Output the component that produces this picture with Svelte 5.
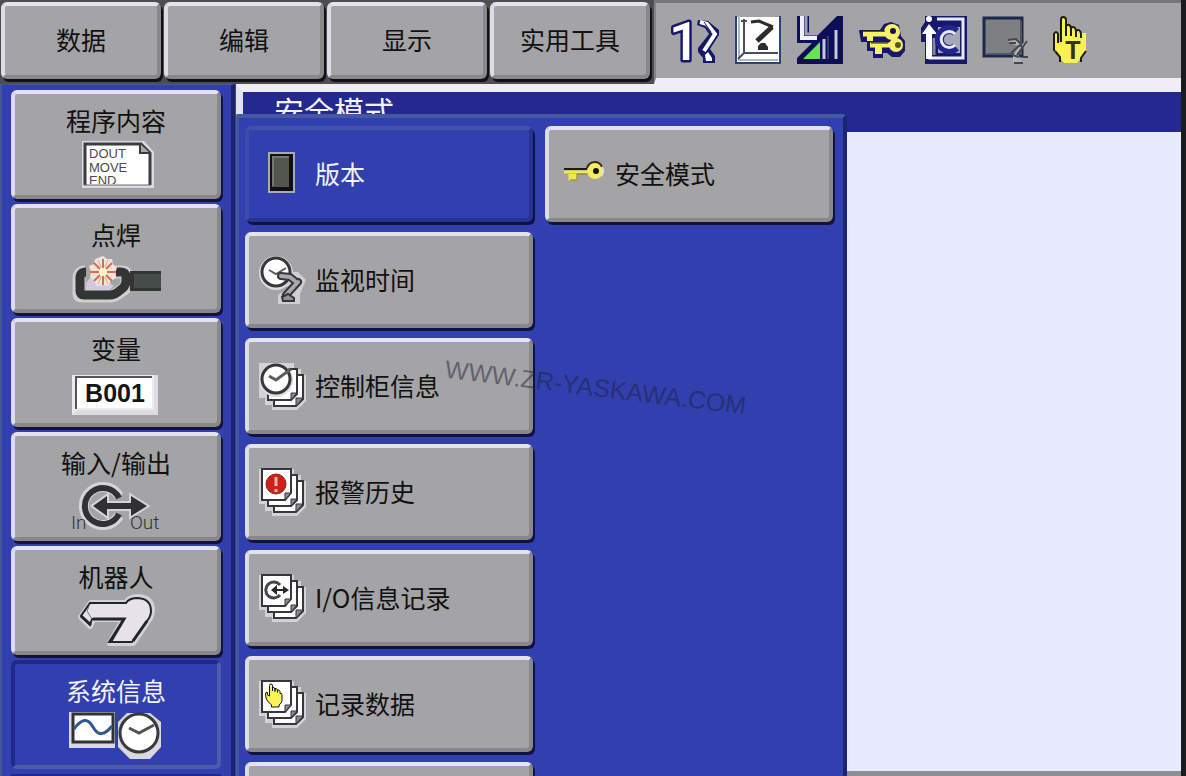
<script>
  const topMenu = ['数据', '编辑', '显示', '实用工具'];
  const tools = [
    { id: 'cycle', label: '步骤' },
    { id: 'coord', label: '坐标系' },
    { id: 'speed', label: '手动速度' },
    { id: 'keys', label: '安全' },
    { id: 'loop', label: '循环' },
    { id: 'state', label: '状态' },
    { id: 'teach', label: '示教' }
  ];
  const sections = [
    { id: 'doc', label: '程序内容' },
    { id: 'weld', label: '点焊' },
    { id: 'variable', label: '变量' },
    { id: 'inout', label: '输入/输出' },
    { id: 'robot', label: '机器人' },
    { id: 'system', label: '系统信息' }
  ];
  const firstColumn = [
    { id: 'version', label: '版本' },
    { id: 'time', label: '监视时间' },
    { id: 'cabinet', label: '控制柜信息' },
    { id: 'alarm', label: '报警历史' },
    { id: 'iolog', label: 'I/O信息记录' },
    { id: 'record', label: '记录数据' }
  ];
  let section = $state('system');
  let item = $state('version');
</script>

{#snippet hand()}
  <path d="M11 25V4Q11 1 14 1Q17 1 17 4V15V8Q21 7 22 11V16V10Q26 9 27 13V18V13Q31 12 32 16V20Q36 18 36 23V34Q36 39 30 43V47H15V43L7 35Q3 30 3 21Q3 16 7 18V23Z" fill="#fbf45a" stroke="#16140e" stroke-width="2" />
{/snippet}

{#snippet pages()}
  <path d="M1 1H36V7H43V13H48V39L39 48H14V43H7V36H1Z" fill="#d3d2d7" />
  <path d="M16 13H45V37L38 44H16Z" fill="#fff" stroke="#37373a" stroke-width="2" />
  <path d="M45 36L38 36V44Z" fill="#8b8a8e" stroke="#37373a" />
  <path d="M10 7H39V32L33 38H10Z" fill="#fff" stroke="#37373a" stroke-width="2" />
  <path d="M39 31L33 31V38Z" fill="#8b8a8e" stroke="#37373a" />
{/snippet}

{#snippet sheet()}
  <path d="M4 1H33V25L27 32H4Z" fill="#fff" stroke="#37373a" stroke-width="2" />
  <path d="M33 25H27V32Z" fill="#8b8a8e" stroke="#37373a" />
{/snippet}

{#snippet toolIcon(id)}
  <svg viewBox="0 0 48 48" width="48" height="48" aria-hidden="true">
    {#if id === 'cycle'}
      <text x="-3" y="44" font-size="54" font-weight="500" font-family="Roboto, sans-serif" fill="#fff" stroke="#16186c" stroke-width="5" stroke-linejoin="round" paint-order="stroke">1</text>
      <path d="M26 4L36 5L47 14V19L38 33L43 40V47H31V42L26 36V32L37 18L33 12L25 9Z" fill="#16186c" />
      <path d="M28 6L35 8L43 18L32 35" fill="none" stroke="#fff" stroke-width="4" />
      <path d="M33 39L36 36L40 42V45H34Z" fill="#fff" />
      <path d="M32 6L39 16L35 24" fill="none" stroke="#16186c" stroke-width="1" />
    {:else if id === 'coord'}
      <rect x="2" y="1" width="44" height="46" fill="#fff" />
      <path d="M2 0V47H46V0" fill="none" stroke="#2d4370" stroke-width="2" />
      <path d="M5 0V44H44" fill="none" stroke="#a9b8cc" stroke-width="2" />
      <path d="M10 3V37H44M10 37L4 43M7 5H13" fill="none" stroke="#4a4e55" stroke-width="2" />
      <path d="M17 6L25 5L39 11" fill="none" stroke="#2c2c2e" stroke-width="3" />
      <path d="M38 11L23 25" fill="none" stroke="#2c2c2e" stroke-width="5" />
      <path d="M27 27H31L34 31V34H24V30Z" fill="#2c2c2e" />
    {:else if id === 'speed'}
      <path d="M47 0V48H1V42L16 27H1V0H13V19H22L41 0Z" fill="#0d0d58" />
      <path d="M6 0V22H21" fill="none" stroke="#f2f1fa" stroke-width="4" />
      <path d="M10 0V18H22" fill="none" stroke="#a2a2b4" stroke-width="3" />
      <path d="M7 43L24 26V43Z" fill="#62e653" />
      <path d="M28 43V23M40 43V14" fill="none" stroke="#c7c8dd" stroke-width="3" />
      <path d="M32 43V20" fill="none" stroke="#5d5e93" stroke-width="1" />
    {:else if id === 'keys'}
      <path d="M1 14H22L26 8L33 6L41 9L43 20L47 25V35L42 41H34L29 37H25V42H15V35H9V26H3Z" fill="#16186c" />
      <path d="M5 18H28M12 29H34" stroke="#f9f06a" stroke-width="5" />
      <path d="M9 20H15V25H9ZM17 31H24V38H17Z" fill="#f9f06a" />
      <circle cx="34" cy="16" r="8" fill="#f9f06a" />
      <circle cx="38" cy="29" r="7" fill="#f9f06a" />
      <path d="M5 15H27M13 27H30" stroke="#26240e" stroke-width="1" />
      <circle cx="35" cy="15" r="3" fill="#14154b" />
      <circle cx="40" cy="29" r="3" fill="#55551f" />
    {:else if id === 'loop'}
      <path d="M1 12L5 6V0H47V48H5V26H1Z" fill="#16186c" />
      <path d="M17 3H43V42H10V30" fill="none" stroke="#e9ebfa" stroke-width="3" />
      <path d="M18 11H40V37H18Z" fill="#a5a7b4" />
      <path d="M14 9H40" stroke="#16186c" stroke-width="4" />
      <circle cx="9" cy="3" r="3" fill="#fff" />
      <path d="M9 8L17 18H12V43H6V18H2Z" fill="#fff" />
      <path d="M14 22V39" stroke="#8587a0" stroke-width="3" />
      <path d="M36 16A10 10 0 1 0 36 31" fill="none" stroke="#22268a" stroke-width="9" />
      <path d="M35 18A8 8 0 1 0 35 29" fill="none" stroke="#e9ebfa" stroke-width="3" />
    {:else if id === 'state'}
      <rect x="2" y="2" width="38" height="38" fill="#7d7f80" stroke="#1c2850" stroke-width="3" />
      <path d="M5 38H39V5" fill="none" stroke="#4d5565" stroke-width="2" />
      <path d="M26 23H36L40 28L46 24L36 38L40 46H31V40L37 30L27 27Z" fill="#b4b3b6" />
      <path d="M26 24L34 23L39 28V31M27 27H34M38 29L29 37M45 25L35 39M30 39L37 41M32 47H41M41 41H46" fill="none" stroke="#45474c" stroke-width="2" />
    {:else}
      <path d="M17 25V4Q17 1 19 1Q22 1 22 4V16V8Q26 7 27 11V16V11Q31 10 32 14V18V14Q36 13 37 17L42 17V36L37 42L33 47H20L16 42L11 36Q9 29 9 18Q12 14 14 18V26Z" fill="#f8f154" />
      <path d="M10 35V18Q12 14 14 18V27M17 26V4Q17 1 19 1Q22 1 22 4V20M22 10Q26 7 27 12V20M27 12Q31 9 32 15V21M32 15Q36 12 37 18V22M11 35L16 41V46M42 35L37 42V46" fill="none" stroke="#1d1c12" stroke-width="2" />
      <text x="29" y="43" text-anchor="middle" font-size="25" font-weight="700" font-family="Liberation Sans, sans-serif" fill="#33321e">T</text>
    {/if}
  </svg>
{/snippet}

{#snippet sectionIcon(id)}
  <svg viewBox="0 0 96 50" width="96" height="50" aria-hidden="true">
    {#if id === 'doc'}
      <path d="M14 0H76L86 11V47H14Z" fill="#dcdcdf" />
      <path d="M17 44V3H73L82 12V44" fill="#fff" stroke="#3b3e3e" stroke-width="3" />
      <path d="M16 44H83" stroke="#66686a" stroke-width="1" />
      <path d="M72 3V12H82" fill="#aaa" stroke="#3b3e3e" stroke-width="2" />
      <svg class="crop" x="21" y="5" width="50" height="38" viewBox="0 0 50 38">
        <g font-size="13" font-family="Liberation Sans, sans-serif" fill="#4b4b4e">
          <text x="0" y="12">DOUT</text>
          <text x="0" y="26">MOVE</text>
          <text x="0" y="39">END</text>
        </g>
      </svg>
    {:else if id === 'weld'}
      <path d="M17 17Q11 17 11 23V39Q11 41 14 41H43Q46 41 50 38L56 34Q59 31 59 27V22Q59 17 54 17H47" fill="none" stroke="#cfced1" stroke-width="13" />
      <path d="M18 17Q12 17 12 23V36Q12 40 16 40H42Q46 40 50 37L55 33Q58 30 58 26V22Q58 17 53 17H48" fill="none" stroke="#313534" stroke-width="9" />
      <rect x="62" y="16" width="31" height="20" fill="#313534" />
      <rect x="66" y="19" width="27" height="14" fill="#454c4a" />
      <path d="M18 35V28L24 20L40 27L46 31L41 35Z" fill="#d3c9dc" />
      <path d="M35 1L39 4L44 4L45 9L49 13L47 18L48 23L43 26L40 31L35 30L29 31L26 26L22 22L23 17L21 11L26 9L27 4Z" fill="#f1e2dc" />
      <path d="M35 4V13M35 21V30M22 17H31M39 17H48M26 8L32 14M44 8L38 14M26 26L32 20M44 26L38 20" stroke="#d5704c" stroke-width="2" />
      <path d="M30 5L33 12M40 5L37 12M30 29L33 22M40 29L37 22" stroke="#e3a78c" stroke-width="1" />
      <circle cx="35" cy="17" r="4" fill="#fff4c8" />
    {:else if id === 'variable'}
      <rect x="4" y="6" width="86" height="40" fill="#ececec" />
      <path d="M4 46L9 41H86V6H90V46H4Z" fill="#dcdbde" />
      <path d="M8 40V8H84" fill="none" stroke="#555557" stroke-width="2" />
      <rect x="9" y="9" width="75" height="30" fill="#fff" />
      <text x="47" y="33" text-anchor="middle" font-size="25" font-weight="700" font-family="Liberation Sans, sans-serif" fill="#151515">B001</text>
    {:else if id === 'inout'}
      <path d="M51 13A19 19 0 1 0 51 33" fill="none" stroke="#d5d5d7" stroke-width="10" />
      <path d="M25 23L39 13V20H63V13L79 23L63 33V26H39V33Z" fill="#303133" stroke="#d5d5d7" stroke-width="4" paint-order="stroke" />
      <path d="M51 15A18 18 0 1 0 51 31" fill="none" stroke="#303133" stroke-width="6" />
      <path d="M28 23L38 15L37 21H66L64 15L77 23L64 31L66 25H37L38 31Z" fill="#303133" />
      <g font-size="19" font-family="Roboto, sans-serif" font-weight="300" fill="#333336">
        <text x="3" y="46">In</text>
        <text x="62" y="46">Out</text>
      </g>
    {:else if id === 'robot'}
      <path d="M23 6H58Q61 0 70 0Q84 1 84 13Q84 19 80 24L65 46H42L56 22H25L22 29L13 20Z" fill="#ecebee" stroke="#d3d2d6" stroke-width="6" stroke-linejoin="round" />
      <path d="M22 6H58Q61 1 70 1Q83 2 83 14Q83 19 79 24L64 46H42L56 22H25V27L22 29L13 19Z" fill="#e6e4ea" />
      <path d="M64 45L79 24Q83 19 83 14Q83 2 70 1Q61 1 58 6H22L13 19L22 28L24 22H56L41 45Z" fill="none" stroke="#252527" stroke-width="2" />
      <path d="M25 22H56L43 44M13 19L23 28M79 24L65 44" fill="none" stroke="#252527" stroke-width="3" />
      <path d="M22 7L19 14L24 22" fill="none" stroke="#777" stroke-width="1" />
    {:else}
      <rect x="1" y="1" width="46" height="36" fill="#d9d9df" />
      <rect x="5" y="3" width="40" height="28" fill="#fff" stroke="#303336" stroke-width="3" />
      <path d="M6 18C14 7 20 7 25 16S36 25 44 15" fill="none" stroke="#2e5893" stroke-width="3" />
      <path d="M59 2H82L93 11V36L82 48H62L50 36V11Z" fill="#d9d9df" />
      <circle cx="71" cy="22" r="19" fill="#fff" stroke="#383a3d" stroke-width="3" />
      <path d="M61 17L71 22L86 14" fill="none" stroke="#4e5450" stroke-width="3" />
    {/if}
  </svg>
{/snippet}

{#snippet itemIcon(id)}
  <svg viewBox="0 0 48 48" width="48" height="48" aria-hidden="true">
    {#if id === 'version'}
      <rect x="10" y="2" width="27" height="41" fill="#a9a9bb" />
      <rect x="12" y="4" width="23" height="37" fill="#101010" />
      <rect x="14" y="7" width="17" height="30" fill="#52564f" />
      <path d="M15 36V7H31" fill="none" stroke="#74786f" stroke-width="2" />
    {:else if id === 'key'}
      <path d="M6 19H30" stroke="#1c1b14" stroke-width="2" />
      <path d="M6 22H32M12 24V29H18V24" fill="#f2e84e" stroke="#f2e84e" stroke-width="3" />
      <path d="M12 30H19V24H30" fill="none" stroke="#7d7726" stroke-width="1" />
      <circle cx="37" cy="21" r="8" fill="#f4ec62" />
      <path d="M29 18Q31 12 37 12Q42 12 44 17" fill="none" stroke="#33301b" stroke-width="2" />
      <circle cx="38" cy="21" r="3" fill="#15140d" />
      <path d="M43 26A8 8 0 0 0 44 17" fill="none" stroke="#e5e1d2" stroke-width="2" />
    {:else if id === 'time'}
      <circle cx="18" cy="17" r="17" fill="#dddce0" />
      <path d="M20 16H40L48 24L42 38V48H20V39L30 32Z" fill="#cfced2" />
      <circle cx="18" cy="16" r="14" fill="#fff" stroke="#37373a" stroke-width="3" />
      <path d="M11 14L18 18L28 12" fill="none" stroke="#5b5b5e" stroke-width="2" />
      <path d="M23 20L32 21L37 25M40 26L28 39" fill="none" stroke="#37373a" stroke-width="8" stroke-linejoin="round" stroke-linecap="round" />
      <path d="M23 20L32 21L37 25M40 26L28 39" fill="none" stroke="#a9a9ac" stroke-width="4" stroke-linejoin="round" stroke-linecap="round" />
      <path d="M24 41L30 38L36 42V45H25Z" fill="#929295" stroke="#37373a" stroke-width="2" />
    {:else}
      {@render pages()}
      {#if id === 'cabinet'}
        <circle cx="18" cy="18" r="17" fill="#dddce0" />
        <circle cx="18" cy="17" r="14" fill="#fff" stroke="#37373a" stroke-width="3" />
        <path d="M11 14L18 18L33 7" fill="none" stroke="#5b5b5e" stroke-width="3" />
      {:else}
        {@render sheet()}
        {#if id === 'alarm'}
          <circle cx="18" cy="16" r="10" fill="#cf211c" stroke="#8d2622" />
          <path d="M18 9V18M18 21V24" stroke="#f3b2a6" stroke-width="3" />
        {:else if id === 'iolog'}
          <path d="M22 11A8 8 0 1 0 22 21" fill="none" stroke="#46464a" stroke-width="3" />
          <path d="M13 16L19 11V15H25V12L31 16L25 20V17H19V21Z" fill="#29292c" />
        {:else}
          <svg x="6" y="3" width="24" height="25" viewBox="0 0 48 48">{@render hand()}</svg>
        {/if}
      {/if}
    {/if}
  </svg>
{/snippet}

<div class="pendant">
  <header class="top">
    <nav class="menubar">
      {#each topMenu as label}
        <button class="key topkey">{label}</button>
      {/each}
    </nav>
    <div class="tools">
      {#each tools as t}
        <button class="tool" aria-label={t.label}>{@render toolIcon(t.id)}</button>
      {/each}
    </div>
  </header>

  <div class="body">
    <nav class="sections">
      {#each sections as s}
        <button class="key section" class:on={section === s.id} onclick={() => (section = s.id)}>
          <span>{s.label}</span>
          {@render sectionIcon(s.id)}
        </button>
      {/each}
      <div class="under"></div>
    </nav>

    <main class="work">
      <h1>安全模式</h1>
      <div class="canvas"></div>

      <div class="popup">
        <div class="column">
          {#each firstColumn as m}
            <button class="key item" class:on={item === m.id} onclick={() => (item = m.id)}>
              {@render itemIcon(m.id)}
              <span>{m.label}</span>
            </button>
          {/each}
          <button class="key item" aria-label="下一项"></button>
        </div>
        <div class="column">
          <button class="key item">
            {@render itemIcon('key')}
            <span>安全模式</span>
          </button>
        </div>
        <div class="mark">WWW.ZR-YASKAWA.COM</div>
      </div>
    </main>
  </div>
</div>

<style>
  :global(body) {
    margin: 0;
    background: #1b1b1d;
  }
  .pendant {
    box-sizing: border-box;
    height: 100vh;
    overflow: hidden;
    display: flex;
    flex-direction: column;
    border-right: 5px solid #1b1b1d;
    font-family: 'Noto Sans CJK SC', 'Noto Sans', sans-serif;
    font-size: 25px;
    color: #111;
  }
  button {
    margin: 0;
    padding: 0;
    font: inherit;
    color: inherit;
  }
  svg {
    display: block;
    flex: none;
    overflow: visible;
  }
  .crop {
    overflow: hidden;
  }
  .key {
    box-sizing: border-box;
    background: #a4a3a5;
    border: 4px solid;
    border-color: #e4e2ee #89878a #89878a #dedce8;
    border-radius: 6px;
    box-shadow: 2px 3px 0 #12123f;
    line-height: 32px;
  }

  .top {
    flex: none;
    display: flex;
    height: 84px;
    background: #5b5b5d;
  }
  .menubar {
    display: flex;
    gap: 3px;
    padding: 2px 4px 5px 1px;
    background: #4e4e50;
  }
  .topkey {
    width: 160px;
    padding-bottom: 4px;
    box-shadow: 2px 3px 0 #111114;
  }
  .tools {
    flex: 1;
    display: flex;
    align-items: flex-start;
    gap: 14px;
    padding: 13px 16px 0 16px;
    background: #a4a3a5;
    border-top: 3px solid #77757a;
    border-bottom: 6px solid #f0edf6;
    border-left: 2px solid #858386;
  }
  .tool {
    border: 0;
    background: none;
  }

  .body {
    flex: 1;
    min-height: 0;
    display: flex;
    background: #3140ae;
  }
  .sections {
    flex: none;
    box-sizing: border-box;
    width: 235px;
    display: flex;
    flex-direction: column;
    gap: 5px;
    padding: 5px 10px 0 9px;
    border: solid;
    border-width: 1px 4px 0 2px;
    border-color: #44569c #1c226c #44569c #44569c;
    background: #3140ae;
  }
  .section {
    flex: none;
    height: 109px;
    display: flex;
    flex-direction: column;
    align-items: center;
    justify-content: flex-start;
    padding-top: 10px;
    gap: 5px;
  }
  .section.on {
    background: #3140ae;
    border-color: #20288a #4a5da6 #4a5da6 #20288a;
    box-shadow: none;
    color: #f3f3ff;
  }
  .under {
    flex: none;
    height: 20px;
    border-top: 3px solid #20288a;
  }

  .work {
    flex: 1;
    min-width: 0;
    position: relative;
    display: flex;
    flex-direction: column;
    border-top: 8px solid #f0edf6;
    border-left: 7px solid #e4e2ee;
    border-bottom: 5px solid #8f8e92;
    background: #e8eaff;
    margin-left: 1px;
  }
  h1 {
    flex: none;
    margin: 0;
    height: 40px;
    padding-left: 31px;
    background: #24298f;
    color: #f3f3ff;
    font-size: 30px;
    font-weight: 400;
    line-height: 36px;
  }
  .canvas {
    flex: 1;
  }
  .popup {
    position: absolute;
    top: 22px;
    left: -7px;
    bottom: -5px;
    box-sizing: border-box;
    display: flex;
    align-items: flex-start;
    gap: 12px;
    padding: 8px 10px 0 6px;
    border: solid;
    border-width: 4px 4px 0 3px;
    border-color: #4458a4 #1c2478 #1c2478 #4458a4;
    border-radius: 2px 5px 0 0;
    background: #3140ae;
    overflow: hidden;
  }
  .column {
    flex: none;
    display: flex;
    flex-direction: column;
    gap: 10px;
  }
  .item {
    flex: none;
    width: 288px;
    height: 96px;
    display: flex;
    align-items: center;
    gap: 9px;
    padding-left: 9px;
  }
  .item span {
    padding-bottom: 3px;
  }
  .item.on {
    background: #3140ae;
    border-color: #3f53a8 #283292 #283292 #3a4cab;
    color: #f3f3ff;
  }
  .mark {
    position: absolute;
    left: 205px;
    top: 255px;
    font-family: 'Liberation Sans', sans-serif;
    font-size: 25px;
    line-height: 28px;
    color: rgba(30, 30, 60, 0.5);
    transform: rotate(7deg);
    pointer-events: none;
  }
</style>
